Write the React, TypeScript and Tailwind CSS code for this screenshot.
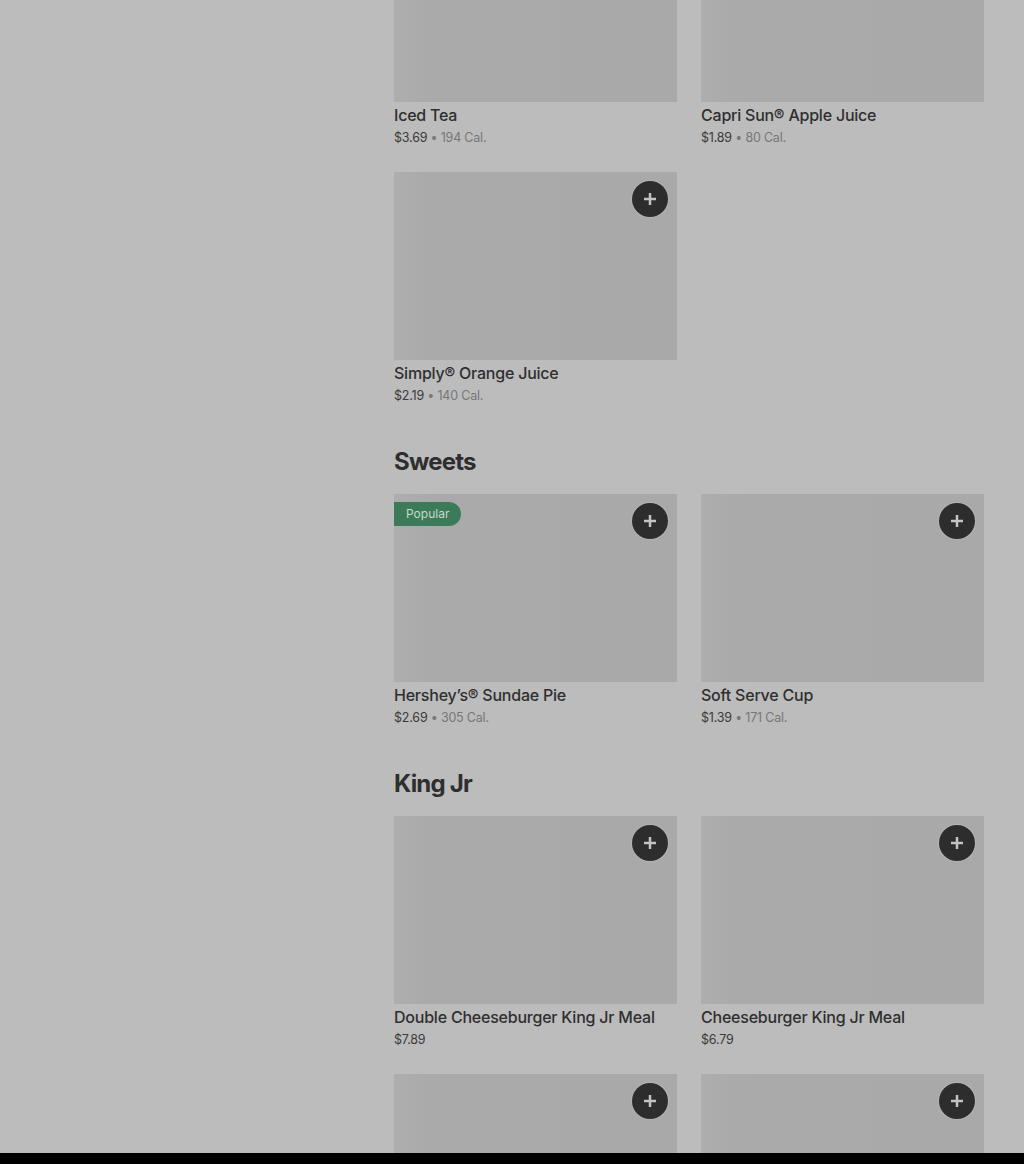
import React from 'react';

interface MenuItem {
  name: string;
  price: string;
  cal?: string;
  popular?: boolean;
  plus?: boolean;
}

interface Section {
  title?: string;
  items: MenuItem[];
}

const sections: Section[] = [
  {
    items: [
      { name: 'Iced Tea', price: '$3.69', cal: '194 Cal.' },
      { name: 'Capri Sun® Apple Juice', price: '$1.89', cal: '80 Cal.' },
      { name: 'Simply® Orange Juice', price: '$2.19', cal: '140 Cal.', plus: true },
    ],
  },
  {
    title: 'Sweets',
    items: [
      { name: 'Hershey’s® Sundae Pie', price: '$2.69', cal: '305 Cal.', popular: true, plus: true },
      { name: 'Soft Serve Cup', price: '$1.39', cal: '171 Cal.', plus: true },
    ],
  },
  {
    title: 'King Jr',
    items: [
      { name: 'Double Cheeseburger King Jr Meal', price: '$7.89', plus: true },
      { name: 'Cheeseburger King Jr Meal', price: '$6.79', plus: true },
      { name: 'Chicken Nuggets King Jr Meal', price: '$6.29', plus: true },
      { name: 'Hamburger King Jr Meal', price: '$5.99', plus: true },
    ],
  },
];

const PlusButton: React.FC = () => (
  <button className="absolute top-[9px] right-[9px] flex h-9 w-9 items-center justify-center rounded-full bg-[#2d2d2d] shadow-[0_0_0_1px_rgba(255,255,255,0.12)]">
    <svg width="12" height="12" viewBox="0 0 12 12" fill="#c4c4c4">
      <rect x="4.75" y="0" width="2.5" height="12" />
      <rect x="0" y="4.75" width="12" height="2.5" />
    </svg>
  </button>
);

const ItemCard: React.FC<{ item: MenuItem }> = ({ item }) => (
  <div>
    <div className="relative h-[188px] bg-gradient-to-r from-[#aeaeae] via-[#aaaaaa] via-[12%] to-[#a9a9a9]">
      {item.popular && (
        <span className="absolute left-0 top-2 flex h-6 items-center rounded-r-full bg-[#3c7b59] px-3 text-[12px] text-[#c6d9cd]">
          Popular
        </span>
      )}
      {item.plus && <PlusButton />}
    </div>
    <div className="mt-px text-base font-medium leading-6 tracking-[-0.22px] text-[#2f2f2f]">{item.name}</div>
    <div className="mt-px text-[12.5px] leading-5 tracking-[-0.2px] text-[#3a3a3a]">
      {item.price}
      {item.cal && <span className="text-[#777777]"> • {item.cal}</span>}
    </div>
  </div>
);

export default function App() {
  return (
    <div
      className="flex h-[1164px] w-[1024px] flex-col overflow-hidden bg-[#bcbcbc]"
      style={{ fontFamily: 'Inter, "Liberation Sans", sans-serif' }}
    >
      <div className="flex min-h-0 flex-1 overflow-hidden">
        <aside className="w-[394px] shrink-0" />
        <main className="-mt-[86px] w-[590px] shrink-0">
          {sections.map((section, i) => (
            <section key={i}>
              {section.title && (
                <h2 className="mt-[40px] mb-[16px] text-2xl font-bold leading-8 tracking-[-0.8px] text-[#2e2e2e]">
                  {section.title}
                </h2>
              )}
              <div className="grid grid-cols-2 gap-6">
                {section.items.map((item) => (
                  <ItemCard key={item.name} item={item} />
                ))}
              </div>
            </section>
          ))}
        </main>
      </div>
      <div className="h-[11px] shrink-0 bg-black" />
    </div>
  );
}
